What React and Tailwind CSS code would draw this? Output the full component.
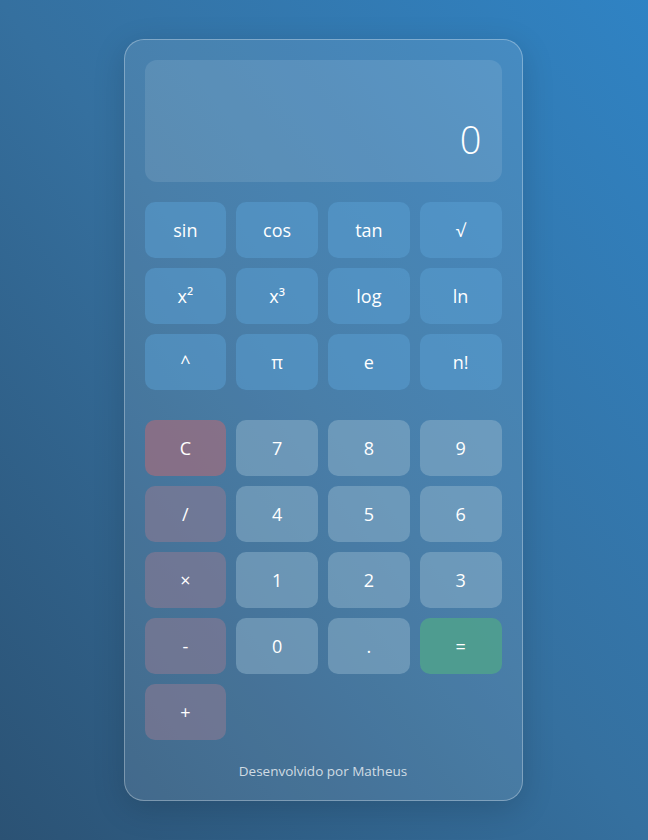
const sci = ['sin', 'cos', 'tan', '√', 'x²', 'x³', 'log', 'ln', '^', 'π', 'e', 'n!'];

const basic = [
  { label: 'C', type: 'clear' },
  { label: '7' }, { label: '8' }, { label: '9' },
  { label: '/', type: 'op' },
  { label: '4' }, { label: '5' }, { label: '6' },
  { label: '×', type: 'op' },
  { label: '1' }, { label: '2' }, { label: '3' },
  { label: '-', type: 'op' },
  { label: '0' }, { label: '.' },
  { label: '=', type: 'eq' },
  { label: '+', type: 'op' },
];

const btnBase = 'h-[56px] rounded-[10px] flex items-center justify-center text-[18px] text-white';

const App = () => {
  return (
    <div
      className="min-h-[840px] w-full flex justify-center items-start pt-[39px] pr-[2px] bg-gradient-to-tr from-[#2b5274] via-[#35709f] to-[#2f83c4]"
      style={{ fontFamily: '"Open Sans", "Noto Sans", sans-serif' }}
    >
      <div className="w-[399px] rounded-[20px] border border-white/30 bg-white/10 shadow-[0_8px_32px_rgba(0,0,0,0.15)] p-[20px] flex flex-col">
        {/* display */}
        <div className="h-[122px] rounded-[12px] bg-white/10 flex items-end justify-end px-[20px] pb-[24px]">
          <span className="text-[38px] font-light text-white leading-none">0</span>
        </div>

        {/* scientific keys */}
        <div className="grid grid-cols-4 gap-[10px] mt-[20px]">
          {sci.map((s) => (
            <button key={s} className={`${btnBase} bg-[#5a9fd4]/50`}>
              {s}
            </button>
          ))}
        </div>

        {/* basic keys */}
        <div className="grid grid-cols-4 gap-[10px] mt-[30px]">
          {basic.map((b) => (
            <button
              key={b.label}
              className={`${btnBase} ${
                b.type === 'clear'
                  ? 'bg-[#b06a78]/60'
                  : b.type === 'op'
                  ? 'bg-[#8a7a92]/60'
                  : b.type === 'eq'
                  ? 'bg-[#4fa08e]/90'
                  : 'bg-[#8fb4cc]/50'
              }`}
            >
              {b.label}
            </button>
          ))}
        </div>

        <p className="mt-[22px] text-center text-[13.5px] leading-[18px] text-white/75">Desenvolvido por Matheus</p>
      </div>
    </div>
  );
};

export default App;
